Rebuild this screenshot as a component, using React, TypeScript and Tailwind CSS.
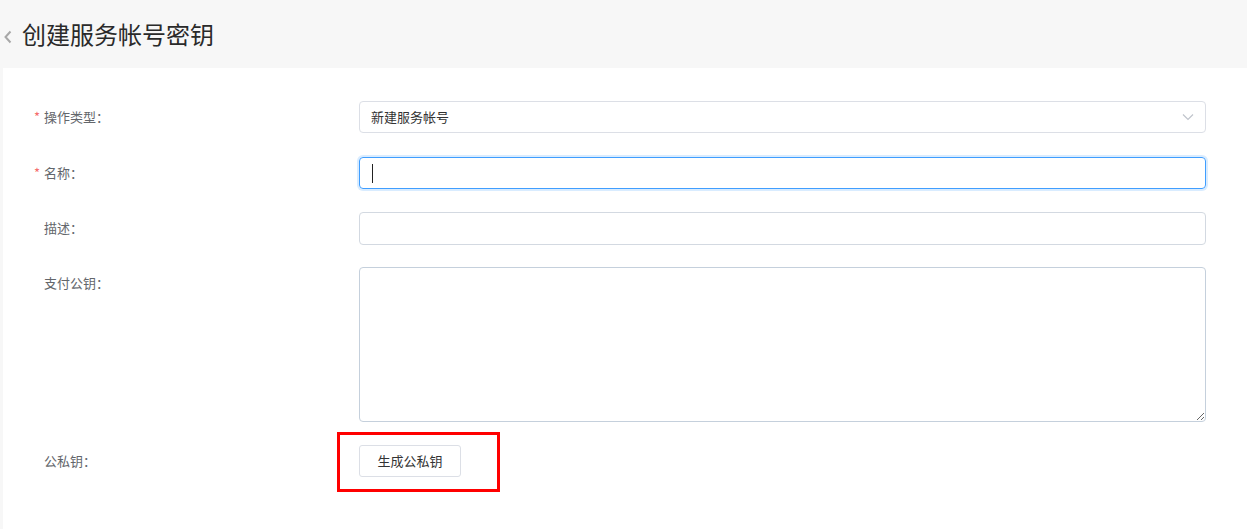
import React from "react";

const font = { fontFamily: '"Noto Sans CJK SC", "Noto Sans", sans-serif' };

function Label({ text, required }: { text: string; required?: boolean }) {
  return (
    <div className="w-[356px] shrink-0 pl-[31px] flex items-start text-[13px] leading-[32px] text-[#63666b]">
      <span className="w-[10px] text-[#f56c6c]">{required ? "*" : ""}</span>
      <span>{text}：</span>
    </div>
  );
}

export default function App() {
  return (
    <div className="w-[1247px] h-[529px] bg-[#f7f7f7] overflow-hidden" style={font}>
      <div className="h-[68px] flex items-center pl-[3px]">
        <svg width="10" height="14" viewBox="0 0 10 14" className="mr-[9px] mt-[5px]">
          <polyline points="7.5,1.5 2.5,7 7.5,12.5" fill="none" stroke="#a8a8a8" strokeWidth="2" />
        </svg>
        <h1 className="text-[24px] leading-none text-[#2a2a2a]">创建服务帐号密钥</h1>
      </div>
      <div className="pl-[3px] h-[461px]">
        <div className="bg-white h-full pt-[33px]">
          <div className="flex mb-[24px]">
            <Label text="操作类型" required />
            <div className="w-[847px] h-[32px] border border-[#dcdfe6] rounded-[4px] flex items-center justify-between px-[11px] text-[13px] text-[#333]">
              <span>新建服务帐号</span>
              <svg width="12" height="8" viewBox="0 0 12 8">
                <polyline points="1,1.5 6,6.5 11,1.5" fill="none" stroke="#c0c4cc" strokeWidth="1.2" />
              </svg>
            </div>
          </div>
          <div className="flex mb-[23px]">
            <Label text="名称" required />
            <div className="w-[847px] h-[32px] border border-[#409eff] rounded-[4px] ring-2 ring-[#409eff]/20 flex items-center px-[12px]">
              <span className="w-[1px] h-[19px] bg-[#222]" />
            </div>
          </div>
          <div className="flex mb-[22px]">
            <Label text="描述" />
            <div className="w-[847px] h-[33px] border border-[#d3d9e1] rounded-[4px]" />
          </div>
          <div className="flex mb-[23px]">
            <Label text="支付公钥" />
            <textarea
              readOnly
              className="w-[847px] h-[155px] border border-[#c5d0dc] rounded-[4px] outline-none resize-y block"
            />
          </div>
          <div className="flex">
            <Label text="公私钥" />
            <div className="relative">
              <button className="w-[102px] h-[32px] border border-[#dcdfe6] rounded-[3px] bg-white text-[13px] text-[#333]">
                生成公私钥
              </button>
              <div className="absolute -left-[22px] -top-[13px] w-[163px] h-[60px] border-[3px] border-[#ff0000]" />
            </div>
          </div>
        </div>
      </div>
    </div>
  );
}
